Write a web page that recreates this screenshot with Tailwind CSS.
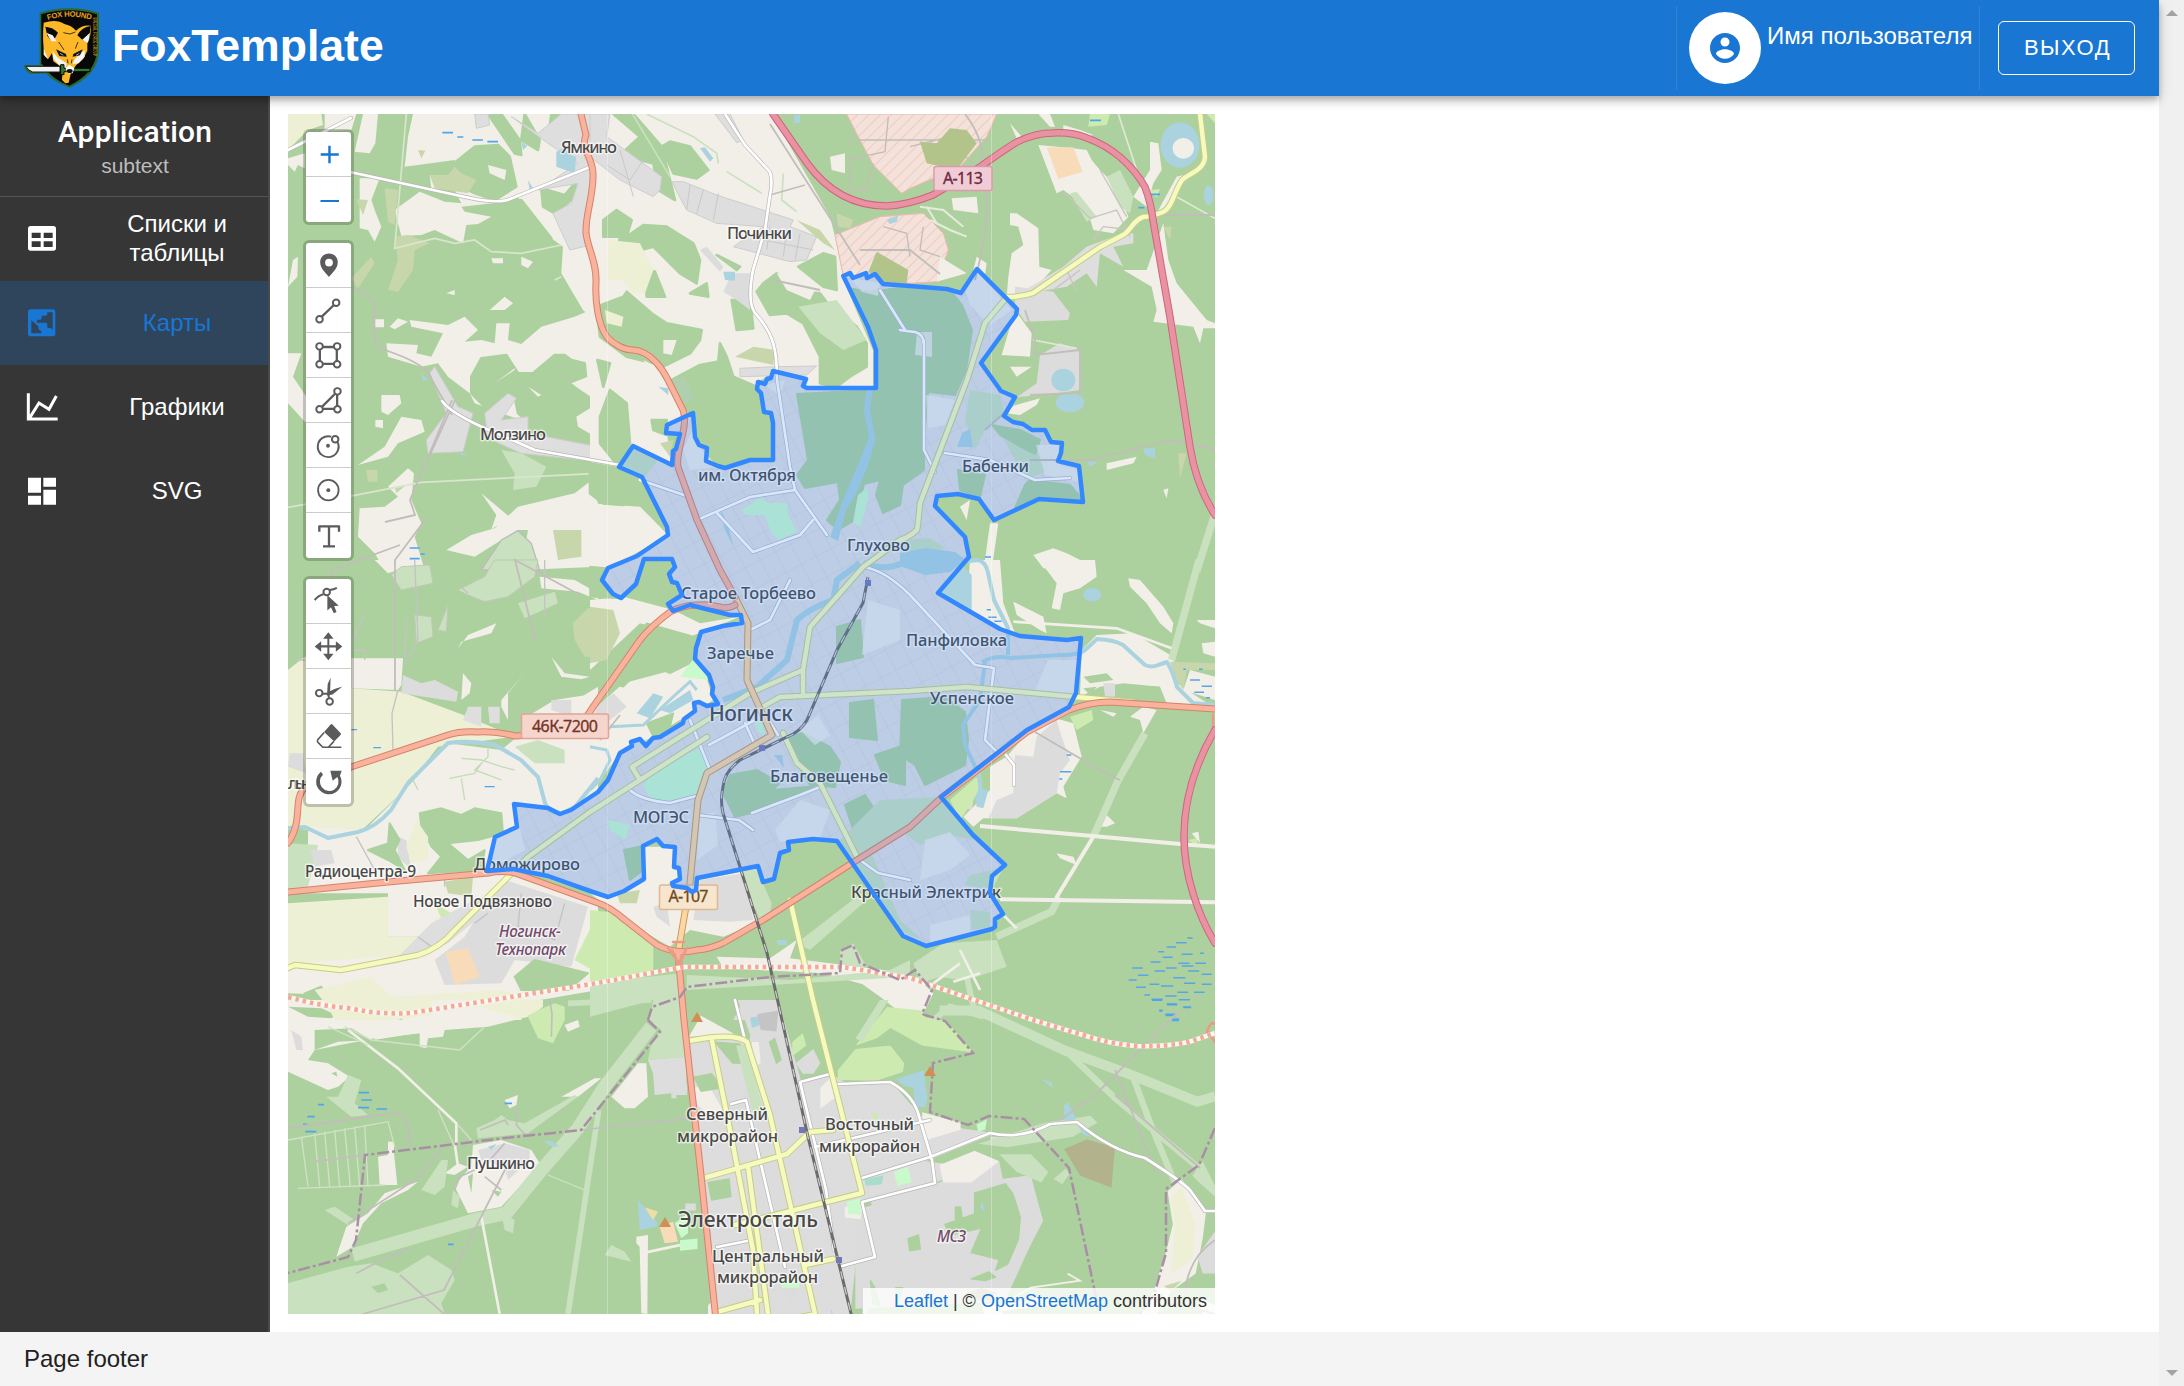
<!DOCTYPE html>
<html lang="ru">
<head>
<meta charset="utf-8">
<title>FoxTemplate</title>
<script src="https://cdn.jsdelivr.net/npm/@tailwindcss/browser@4"></script>
</head>
<body class="w-[2184px] h-[1386px] overflow-hidden flex bg-white font-['Liberation_Sans',Arial,sans-serif]">
<div class="w-[2159px] h-full flex flex-col">
  <header class="relative z-10 h-24 shrink-0 bg-[#1976d2] text-white flex items-center pl-6 pr-6 shadow-[0_3px_6px_-1px_rgba(0,0,0,0.2),0_6px_8px_0_rgba(0,0,0,0.14),0_2px_15px_0_rgba(0,0,0,0.12)]">
    <svg class="w-[76px] h-20 shrink-0" viewBox="72 24 228 240">
      <path d="M119 38Q208 12 297 38V150Q296 225 208 263Q160 245 138 220L90 222Q74 212 72 195L119 196Z" fill="#2c6a2c"/>
      <path d="M124 43Q208 19 291 43V150Q288 218 208 257Q165 240 144 215L124 190Z" fill="#080808"/>
      <path id="arc" d="M143 60Q208 40 276 60" fill="none"/>
      <text fill="#e8a21e" font-size="23" font-weight="700" textLength="132"><textPath href="#arc">FOX HOUND</textPath></text>
      <text transform="translate(280 52) rotate(90)" fill="#b9831d" font-size="14" font-weight="700" textLength="116" lengthAdjust="spacingAndGlyphs">SPECIAL FORCE GROUP</text>
      <path d="M131 68Q170 56 193 72Q214 76 228 92Q246 74 272 77Q275 105 262 130L262 152 250 176 228 196 212 222 206 248 196 250 186 240 188 204 160 184 156 160 144 178 134 168Q126 120 131 68Z" fill="#fdb827"/>
      <path d="M136 80Q160 82 174 98L164 116 156 124 142 108Z M272 78Q244 82 232 106L250 122 268 112Z" fill="#0a0a0a"/>
      <path d="M139 98L158 106 170 124 154 124Z M270 98L264 128 246 120Z M158 152L172 172 188 182 200 190 198 204 178 196 160 176Z M254 150L236 166 224 178 218 192 236 190 254 170Z M131 146L144 176 131 164Z" fill="#f4f4f4"/>
      <path d="M168 148L198 162 200 170 178 168Z M248 148L220 162 218 170 240 166Z" fill="#111"/>
      <path d="M180 160L190 166M228 166L238 160" stroke="#f4f4f4" stroke-width="2"/>
      <path d="M190 98L210 102 226 96M176 126L192 150M234 126L226 146M202 178L204 190M216 178L214 190" fill="none" stroke="#4b3105" stroke-width="3"/>
      <path d="M78 199H180V216H98Q84 212 78 199Z" fill="#f2f2f2" stroke="#181818" stroke-width="3"/>
      <path d="M182 194H192V205H270V215H192V224H182Z" fill="#2e7a2e" stroke="#0a0a0a" stroke-width="3"/>
      <path d="M197 204L208 194 223 204 218 220 202 220Z" fill="#fff"/><ellipse cx="209" cy="213" rx="9" ry="6" fill="#111"/>
    </svg>
    <h1 class="ml-3 -mt-1 text-[44.6px] leading-none font-bold">FoxTemplate</h1>
    <div class="ml-auto h-[84px] w-[304px] border-x border-[#3384d7] flex pl-3">
      <span class="mt-1.5 size-[72px] rounded-full bg-white flex items-center justify-center shrink-0">
        <svg class="size-9" viewBox="0 0 24 24" fill="#1976d2"><path d="M12 2C6.48 2 2 6.48 2 12s4.48 10 10 10 10-4.480 10-10S17.520 2 12 2zm0 3c1.660 0 3 1.340 3 3s-1.340 3-3 3-3-1.340-3-3 1.340-3 3-3zm0 14.200c-2.500 0-4.710-1.280-6-3.220.03-1.990 4-3.080 6-3.080 1.990 0 5.970 1.090 6 3.080-1.290 1.940-3.500 3.220-6 3.220z"/></svg>
      </span>
      <span class="ml-1.5 mt-4 text-2xl leading-[27px] whitespace-nowrap">Имя пользователя</span>
    </div>
    <button class="ml-[18px] w-[137px] h-[54px] rounded-md border border-white pl-0.5 text-[22px] leading-none tracking-[1.5px]">ВЫХОД</button>
  </header>

  <div class="flex h-[1236px] shrink-0">
    <aside class="w-[270px] bg-[#363636] border-r-2 border-[#4a4a4a] text-white">
      <div class="h-[101px] border-b border-[#545454] text-center pt-4 pl-0.5">
        <div class="font-[Roboto] font-medium text-[30px] tracking-[0.25px] leading-10">Application</div>
        <div class="text-[21px] leading-[30px] -mt-px text-[#bdbdbd]">subtext</div>
      </div>
      <nav class="text-2xl leading-[29px] text-center">
        <a class="flex items-center h-[84px] pl-6">
          <svg class="size-9 shrink-0" viewBox="72 663 108 108"><path fill-rule="evenodd" fill="#fff" d="M92 678H160Q168 678 168 686V744Q168 752 160 752H92Q84 752 84 744V686Q84 678 92 678ZM95 698V714H122V698ZM131 698V714H158V698ZM95 724V741H122V724ZM131 724V741H158V724Z"/></svg>
          <span class="ml-[50px] w-[134px] pb-0.5">Списки и таблицы</span></a>
        <a class="flex items-center h-[84px] pl-6 bg-[#2f455c] text-[#1976d2]">
          <svg class="size-9 shrink-0" viewBox="72 344 108 108"><path fill-rule="evenodd" fill="#1976d2" d="M92 357H158Q166 357 166 365V430Q166 438 158 438H92Q84 438 84 430V365Q84 357 92 357ZM158 366H142V371Q142 376 136 376H125V384Q125 388 120 388H111V397H138Q142 397 142 402V413H149Q155 413 158 419ZM94 390V429H124V421Q116 421 115 412V408Z"/></svg>
          <span class="ml-[50px] w-[134px] pb-0.5">Карты</span></a>
        <a class="flex items-center h-[84px] pl-6">
          <svg class="size-9 shrink-0" viewBox="72 595 108 108" fill="none" stroke="#fff" stroke-width="9"><path d="M85 608V685H173M88 683L117 637L147 656L169 616"/></svg>
          <span class="ml-[50px] w-[134px] pb-0.5">Графики</span></a>
        <a class="flex items-center h-[84px] pl-6">
          <svg class="size-9 shrink-0" viewBox="72 847 108 108" fill="#fff"><path d="M84 861H123V906H84ZM84 915H123V942H84ZM130 861H168V888H130ZM130 897H168V942H130Z"/></svg>
          <span class="ml-[50px] w-[134px] pb-0.5">SVG</span></a>
      </nav>
    </aside>

    <main class="p-[18px]">
      <div class="relative w-[927px] h-[1200px] overflow-hidden">
        <svg class="block w-[927px] h-[1200px]" viewBox="288 114 927 1200">
          <defs>
            <pattern id="mil" width="9" height="9" patternUnits="userSpaceOnUse" patternTransform="rotate(45)"><rect width="9" height="9" fill="#f2e2da"/><path d="M0 0V9" stroke="#f5bdb6" stroke-width="1.500"/></pattern>
            <pattern id="milbig" width="24" height="24" patternUnits="userSpaceOnUse" patternTransform="rotate(45)"><rect width="24" height="24" fill="#f2e2da"/><path d="M0 0V24" stroke="#f5bdb6" stroke-width="4"/></pattern>
            <pattern id="res" width="17" height="23" patternUnits="userSpaceOnUse" patternTransform="rotate(-28)"><rect width="17" height="23" fill="#dfdfdf"/><path d="M0 0H17M0 0V23" stroke="#d2d2d2" stroke-width="1.200"/></pattern>
            <pattern id="res2" width="15" height="24" patternUnits="userSpaceOnUse" patternTransform="rotate(-14)"><rect width="15" height="24" fill="#dddddd"/><path d="M0 0H15M0 0V24" stroke="#d2d2d2"/></pattern>
            <path id="town" d="M843.300 276L850 273 853 278 866 273 867 278 875 274 883 284 910 286 947 289 961 293 977 269 1017 309 1016 315 981 363 1001 391 1015 397 1004 416 1013 422 1023 424 1032 430 1045 430 1051 442 1062 443 1061 453 1058 461 1079 466 1083 502 1039 499 994 520 979 499 958 494 937 496 935 506 965 537 969 557 938 593 1000 629 1020 636 1067 640 1081 638 1076 693 1069 707 1027 730 941 797 973 835 1005 865 992 876 990 893 1003 914 995 919 995 927 992 929 926 946 903 936 837 841 813 839 788 842 789 850 780 853 774 879 763 882 758 866 697 878 696 890 692 892 687 888 673 886 672 883 680 879 679 868 674 867 675 847 663 846 657 839 643 846 644 879 624 891 608 897 590 891 548 876 513 869 487 871 495 837 517 827 514 804 548 808 560 814 571 810 598 792 608 780 620 753 632 746 631 742 640 739 646 746 653 738 660 737 683 723 684 719 695 711 694 703 699 702 707 706 718 704 712 694 713 687 709 675 695 659 696 648 701 632 723 626 742 623 741 615 730 615 690 605 673 611 668 604 682 595 677 583 672 582 669 574 675 567 672 559 644 559 636 584 621 598 613 594 602 580 608 568 637 556 668 535 667 527 642 477 619 467 633 446 672 465 673 451 676 449 680 434 666 433 667 425 693 413 695 437 699 445 707 448 706 461 718 466 725 468 750 460 773 460 773 423 771 413 764 412 761 393 757 389 758 382 765 384 767 379 771 378 773 371 806 379 803 386 807 388 876 388 876 350 868 327Z"/>
            <path id="motorway" d="M773 114L807 163C830 195 858 206 887 206C905 205 918 201 933 195L980 167C997 155 1008 147 1017 142Q1035 133 1053 133Q1072 132 1087 138Q1106 145 1120 157Q1136 171 1145 187Q1151 203 1153 220L1170 317L1190 447Q1196 485 1215 515M1215 730C1195 764 1184 800 1184 837C1184 875 1198 915 1215 943"/>
            <path id="trunk" d="M581 114L586 135C580 150 592 155 593 173C594 195 585 215 586 233C588 250 597 262 596 283C595 300 598 325 607 337C614 345 625 350 633 350C652 351 664 372 668 380L683 410C689 428 675 450 678 467L697 520L720 570L735 597M735 605C725 612 715 603 700 605Q685 604 670 612Q650 627 640 640L593 707Q580 730 553 734L515 736Q495 731 478 732Q460 731 448 735L351 767Q310 778 305 787C292 800 304 820 288 843M288 892L388 882L488 873Q502 870 515 873L598 903Q610 907 625 920L657 945Q676 955 697 950Q710 949 723 943L763 920L857 860L910 827L941 798L1027 732L1069 710Q1090 702 1110 702L1215 709M678 953L684 1020L701 1175L717 1330"/>
            <path id="prim" d="M735 597L748 623 747 680 772 735 707 773 698 800 690 883 678 953"/>
            <path id="sec" d="M757 710L780 697 910 691 967 687 1076 697 1133 702M1200 114L1205 157C1204 170 1190 173 1182 180C1174 192 1172 208 1163 212Q1150 217 1143 217C1133 220 1130 232 1123 235Q1108 243 1100 247L1033 293Q1022 297 1007 297L985 323 967 380 920 503Q918 525 917 530Q908 538 900 540L863 567 810 627 803 670 803 695M803 670L750 693 632 767 640 780M707 737L640 780 590 812 528 857 455 930Q440 948 418 955L341 970 295 965 288 968M783 733L797 763 820 783 857 857M790 900L813 1000 862 1193M688 1041Q735 1032 747 1042L770 1115 815 1314M712 1041L733 1145 753 1250 757 1314M704 1178L787 1154 810 1132 833 1130M735 1225L862 1193M748 1166L768 1314M717 1312L760 1300M747 1327L811 1315M805 1265L833 1259"/>
            <path id="white" d="M288 150L351 118M350 172L470 198Q500 204 510 199L590 167M288 150L308 140M442 401Q450 412 480 426L535 450 620 465M640 480L690 497M725 114L745 145 770 172Q773 182 770 195L765 230 753 270Q747 302 755 313C775 335 777 352 777 380L790 467 795 490 827 535M697 520L750 497 795 490 M900 330Q905 331 915 332 924 334 924 345V450L935 472M945 453L990 460 1035 480 1070 478M880 290L905 330M863 567Q885 570 910 595L975 665 994 668 985 740 1000 755M717 513L753 552 800 535 813 520M753 830 739 820 697 815M860 860L878 873 910 880M1006 755L1014 765V785M735 1000L745 1040M731 1104L746 1100 785 1267M800 1082L830 1074M800 1082L826 1190 834 1250M838 1084L890 1082Q915 1095 920 1120L932 1160 935 1183 862 1202M815 1147L930 1120M862 1202L875 1257 842 1266M862 1178L930 1157 990 1133Q1020 1140 1050 1124L1077 1122Q1110 1150 1145 1158Q1180 1180 1190 1190L1205 1211H1215M717 1247L752 1240M752 813L800 795 820 787M630 790Q640 800 670 803L700 795M750 630L770 620 790 580M709 745L755 720M745 723L755 745M770 722L778 735M710 770L690 720"/>
            <path id="grey" d="M351 287Q375 295 375 310C370 355 380 345 410 360Q430 370 432 380L452 415M452 400L410 500 415 515 385 522M455 400L430 455M1013 405L985 430M1030 460L1090 460 1170 440 1215 449M1150 215H1215M770 195L805 185M1025 310L1035 340V355L1080 350V393L1030 395M965 114Q985 140 982 165 995 205 975 280M770 124L860 265M773 280L820 290M860 250 910 250 940 274M1035 732L1100 770 1120 780M480 1130L505 1120 508 1125M510 1160 444 1290 363 1314M400 1275L444 1314M288 1128L395 1113Q408 1113 411 1147M1180 1010L1095 1095 1060 1120M1115 1070 1155 1170M1115 1095 1200 1168M970 1300L1130 1292 1215 1314M1185 1300Q1185 1260 1215 1240M332 600V570L400 545M395 690V560L425 520M535 640 515 560 580 595M620 715 600 740"/>
          </defs>
          <rect x="288" y="114" width="927" height="1200" fill="#add19e"/>

          <!-- north-west fields -->
          <g transform="translate(288 110) scale(.33333)">
            <path fill="#eef0d5" d="M0 12H100L105 45 60 60 0 120Z"/>
            <g fill="#f2efe9">
              <path d="M110 12H205L190 60 110 62ZM225 12H270L262 100 245 130 200 125ZM0 145 50 130V175L30 165 20 185 0 165Z"/>
              <path d="M375 12H930V640L885 600 820 490 825 410 790 385 690 262 655 275 520 290 530 305 610 320 570 342 535 345 525 400 440 360 400 375 340 378 320 300 395 245 470 275 520 280 500 240 430 235 425 195 490 200 520 190 500 150 350 170 360 80Z"/>
              <path d="M215 205H275L250 270 260 300 280 350 260 395 240 360 215 355Z"/>
              <path d="M365 630 480 645 530 620 570 660 530 695 580 690 620 700 625 640 665 640 660 690 700 702 760 650 860 620 930 590V960L780 960 560 880 545 850 480 800 450 760 400 770 300 740 295 700 390 705 385 730 430 740 465 670 370 650Z"/>
              <path d="M475 1320 550 1275 620 1255 690 1190 860 1150 905 1115 930 1180V1370L700 1380 720 1260 690 1260 640 1290 560 1340ZM580 1150 670 1225 655 1230 610 1258 625 1215Z"/>
              <path d="M215 1195 290 1190 330 1160 300 1130 360 1075 378 1090 370 1170 400 1240 380 1280 410 1380H290L260 1330 210 1280ZM0 730H40L15 800 55 860V940L0 880ZM280 855 335 855 340 880 300 915 280 905ZM340 920 400 930 410 965 330 1000 300 1040 210 1065 290 1010ZM262 930 285 930V955L262 950ZM15 450 30 440 28 500 0 530ZM610 445H645V460H615ZM700 440 735 455 720 475 700 465ZM605 600 650 560 675 580 650 600ZM475 550 500 540 500 555ZM262 628H288V652H262ZM305 650 330 625 360 635 320 658Z"/>
            </g>
            <g fill="#add19e" stroke="#add19e" stroke-width="8" stroke-linejoin="round">
              <path d="M510 150 560 110 630 105 665 140 685 230 620 270 560 250 530 235 490 170ZM600 12H640L695 90 700 135 680 130ZM710 12 755 90 750 120 700 90ZM790 12H820L810 60 780 90ZM760 235 830 255 860 220 875 250 800 310 765 290ZM640 290 700 270 790 385 650 420Z"/>
              <path d="M550 800 580 745 655 735 690 790 735 790 800 735 830 735 850 750 890 760 895 810 850 825 930 880V1000L880 980 750 960 690 910 680 860 600 900 550 850Z"/>
            </g>
            <path fill="#f2efe9" d="M600 165 655 180 650 210 605 190ZM850 820 900 800 930 830V870ZM865 920 930 880V985L870 950ZM720 830 760 855 750 860ZM620 820 680 775 680 780Z"/>
            <path fill="#c8d7ab" d="M425 195 480 195 500 170 520 190 565 210 540 250 440 235ZM290 235 330 240 320 345 300 335ZM320 380 360 375 425 400 380 420 375 480 330 545 300 540 330 450ZM190 505 250 440 260 460 210 535ZM205 268 240 270 225 315ZM235 1080H268V1115L240 1115ZM390 120 412 122 400 145ZM795 1260H880V1340L810 1350ZM320 1130 355 1125 325 1150Z"/>
            <path fill="#c9e1bf" stroke="#bbb" stroke-width="4" d="M580 1380 640 1290 690 1262 730 1300 755 1380Z"/>
            <path fill="#c9e1bf" d="M640 1020 700 1030 775 1070 745 1130 675 1140 680 1090Z"/>
            <path fill="#dedede" stroke="#cdcdcd" stroke-width="3" d="M425 790 440 770 510 890 555 910 525 1025 420 1030 415 990 475 910ZM590 910 660 850 685 865 640 930 720 920 720 970 930 1010V1055L700 1030 600 985ZM560 12H600L605 45 565 55ZM670 20 750 70 820 12H930V400L845 420 795 310 850 280 870 220 750 240 870 160 780 100Z"/>
            <path fill="#aad3df" d="M805 125 830 112 850 135 865 140 860 190 805 170ZM720 210 735 235 725 240ZM700 95 718 108 705 120ZM400 790 420 810 405 812ZM515 1025 540 1035 520 1035Z"/>
            <path fill="none" stroke="#d9e5cd" stroke-width="5" d="M355 12 320 415 440 385 500 400 560 390 610 425 700 430 820 405M400 1117 930 1090M0 1192 180 1160 400 1117M820 500 800 510"/>
            <path stroke="#4ea5ee" stroke-width="5" d="M463 68H495M508 81H526M553 90H585M598 95H630M365 1314H395M397 1332H410M365 1346H395"/>
          </g>

          <!-- north centre fields -->
          <g transform="translate(590 110) scale(.33333)">
            <path fill="#f2efe9" d="M0 12H545L720 320 735 380 760 500 860 720V835H640L550 785 500 820 550 1050 400 1070 310 910 230 945V970L248 1060 130 1008 86 1072 0 1180ZM0 1180 150 1190 234 1275 50 1380H0ZM720 140 765 130 765 190 725 180Z"/>
            <g fill="#add19e" stroke="#add19e" stroke-width="8" stroke-linejoin="round">
              <path d="M70 12H130L215 110 255 270 205 240 190 160 90 135 150 80ZM240 95 300 110 355 180 320 205 250 190 215 110ZM40 330 80 300 125 330 110 380 160 345 230 350 310 400 330 450 320 520 270 490 190 410 80 440 90 380 40 380Z"/>
              <path d="M165 480 195 485 225 560 170 560ZM110 545 185 610 230 640 335 660 330 690 300 730 220 770 190 760 110 740 30 680 20 590 100 560ZM300 550 350 520 355 560ZM425 570 480 570 490 655 440 660ZM500 545 520 520 560 490 600 540 690 550 720 590 800 650 830 700 830 770 780 800 740 830 690 820 690 740 640 640 590 610 540 615ZM380 435 450 470 440 480ZM625 470 700 430 735 440 740 540 700 530Z"/>
              <path d="M245 810 330 765 385 755 390 700 410 740 430 800 500 830 545 905V1050L480 1050 400 1070 350 1050 310 910 280 900ZM0 1060 86 1075 150 1100 180 1150 100 1185 40 1180 0 1150ZM30 920 60 840 110 880 120 1000 86 1070 30 1000ZM185 930 230 930V975L190 960ZM22 750 60 760 40 830Z"/>
            </g>
            <path fill="#c9e1bf" d="M625 590 740 570 830 690 760 720 690 670Z"/>
            <path fill="#b0cfae" d="M245 810 285 800 310 860 285 885Z"/>
            <path fill="#f2efe9" d="M560 490 680 530 660 570 590 540ZM220 690 260 690 245 735 220 730ZM160 750 200 770 190 800Z"/>
            <path fill="#eef0d5" d="M55 390 150 400 190 480 165 550 130 550 100 510 50 510ZM45 600 100 620 95 650 50 640Z"/>
            <path fill="#dedede" stroke="#cdcdcd" stroke-width="3" d="M0 12H60L50 80 215 200 210 240 190 260 90 210 0 140ZM245 215 280 215 380 255 610 330 600 350 680 380 650 450 600 455 430 410 520 350 380 340 290 300ZM450 775 560 770 680 768 650 795 450 800ZM375 12H420L460 90 440 98Z"/>
            <path fill="none" stroke="#c8c8c8" stroke-width="3" d="M50 165 120 210 160 150M90 120 130 260M300 225 290 300M340 240 320 310M385 250 370 330M540 350 530 420M590 360 580 440M630 370 615 450M520 390 670 420"/>
            <path fill="#dcdcdc" d="M400 545 425 490H480V600L440 570ZM330 420 350 410 400 470 390 485Z"/>
            <path fill="#c8d7ab" d="M435 740 490 710 555 720 550 765 480 750ZM740 310 790 330 780 355 745 350ZM620 330 690 360 735 420 700 400ZM210 1000 250 990 240 1040Z"/>
            <path fill="url(#milbig)" stroke="#f3b7ae" stroke-width="3" d="M770 12H1220L1190 80 1110 170 960 235 935 250 850 165 810 90ZM735 375 870 320 1000 310 1060 370 1075 420 1040 515 960 520 760 498Z"/>
            <path fill="none" stroke="#c3bdba" stroke-width="4" d="M770 90H1200M895 20 885 125 770 150M960 110 1060 85 1150 160M880 350 950 370 960 440M1000 350 990 420 1050 440M780 160V240M850 160 825 240 780 240"/>
            <path fill="#b3c48a" d="M835 485 860 425 955 480 950 520 880 522ZM990 95 1040 100 1080 55 1130 60 1160 100 1100 180 1010 160Z"/>
            <path fill="#aad3df" d="M330 115 345 112 370 145 360 155ZM400 485 435 485V512L405 510ZM205 830 235 835V855ZM612 15H630V38H612ZM890 330 925 315 920 335 900 342ZM690 575 700 590Z"/>
            <path fill="none" stroke="#c9e1bf" stroke-width="5" d="M170 12 310 80 380 130 385 160M410 185 515 250M580 190 575 270 620 305M120 0 240 200"/>
          </g>

          <!-- north-east forest clearings -->
          <g transform="translate(900 110) scale(.33333)">
            <path fill="#f2efe9" d="M330 310 350 310 415 355 418 470 455 480 400 540 320 560 325 500 335 430 370 405 355 350 330 345ZM415 105 520 115 560 120 575 150 600 180 650 230 685 320 640 370 580 360 560 290 490 240 470 250ZM670 480 740 480 790 340 805 450 830 520 920 630 945 640V655H910L900 700 880 650 760 635 770 600 755 530ZM830 200 870 190 790 310 770 310ZM750 95 775 100 785 180 760 220 740 290 700 260 750 180ZM345 600 395 670 390 740 305 735ZM330 890 420 865 410 885 360 915 320 910ZM330 770 395 770 350 800ZM400 1335 460 1315 500 1330 590 1375H430ZM490 45 540 60 580 75 560 80 490 65ZM415 12H450L465 50 450 50ZM330 40 365 80 350 85ZM155 265 230 260 235 310 160 300ZM120 440 200 490 110 515ZM230 440 260 460 255 495 220 480ZM620 1060 710 1040 700 1060 620 1080ZM790 1140 805 1135 800 1165ZM180 1190 210 1170 200 1230ZM270 1240 295 1240 275 1380 255 1350Z"/>
            <path fill="none" stroke="#e6ebdc" stroke-width="6" d="M60 290 130 300 190 350M90 330 150 360 200 380M80 290 110 340"/>
            <path fill="#f8dcba" d="M440 112 520 112 548 185 475 207Z"/>
            <path fill="#c9e1bf" d="M510 250 530 245 590 320 560 335ZM620 200 660 180 700 260 690 310 660 290Z"/>
            <path fill="#cdebb0" d="M565 50 570 12H630L620 45ZM740 240 780 238 770 262ZM920 12H945V40Z"/>
            <path fill="#dedede" d="M350 555 490 470 560 410 640 380 700 370V400L640 410 670 470 600 430 590 530 560 490 500 530Z"/>
            <path fill="#dcdcdc" d="M345 530 460 545 510 610 505 630 375 635 345 590ZM420 735 480 700 540 720 540 840 470 850 350 862 410 820Z"/>
            <g fill="#aad3df"><ellipse cx="840" cy="105" rx="58" ry="68"/><ellipse cx="490" cy="810" rx="36" ry="34"/><ellipse cx="510" cy="878" rx="43" ry="29"/><ellipse cx="926" cy="256" rx="14" ry="30"/><path d="M730 1015H765V1045L735 1035ZM560 1055H595L570 1070Z"/></g>
            <ellipse cx="850" cy="115" rx="32" ry="31" fill="#f2efe9"/>
            <path fill="#c8d7ab" d="M790 350 815 350 810 390ZM835 1030 860 1030 840 1105Z"/>
            <path fill="none" stroke="#c8c4c0" stroke-width="4" d="M490 245 570 325 650 300 690 380M600 180 680 320M580 390 610 350 700 360M460 540 540 480M500 480 530 545"/>
            <path fill="none" stroke="#dfe9d4" stroke-width="5" d="M655 12 710 180M820 255 945 325M400 690 530 715"/>
            <path fill="none" stroke="#c9e1bf" stroke-width="22" d="M945 1210 890 1385"/>
            <path stroke="#4ea5ee" stroke-width="5" d="M570 31H603M750 253H780M715 293H733M255 1341H273"/>
          </g>

          <!-- west valley -->
          <g transform="translate(288 560) scale(.33333)">
            <path fill="#eef0d5" d="M0 330 50 290 190 385 340 395 540 470 680 530 450 560 350 690 200 830 60 810 0 800Z"/>
            <path fill="#f2efe9" d="M190 295H345L340 375 330 390 190 385ZM60 800 230 810 350 690 480 550 640 570 700 520 930 380V700L650 1000 0 1000 60 860ZM300 990 560 950 660 940 930 1030V1290L700 1330 560 1320 0 1300V1200L380 1180 400 1130 300 1130ZM510 265 540 225 600 200 625 190 610 220 520 245ZM640 420 710 340 660 400 660 480 640 440ZM525 340 550 370 545 400 520 420ZM755 50 860 60 930 100V120L870 95 760 85ZM260 0H320L330 30 300 40ZM790 290 830 340 905 350 880 358 820 350ZM700 480 800 420 930 400V470L700 520Z"/>
            <path fill="#c9e1bf" stroke="#c0c8b8" stroke-width="3" d="M310 45 340 20 425 15 435 70 340 90ZM510 90 590 50 620 0H750L740 50 660 110 590 125 540 105ZM380 165 430 170 435 230 385 250ZM450 210 480 135 475 215Z"/>
            <path fill="#c9e1bf" d="M690 130 800 95 810 130 710 175ZM680 560 750 540 830 570 830 610 740 610ZM0 850 90 855 60 980 0 990Z"/>
            <path fill="#c8d7ab" d="M855 190 900 145 930 150V290L890 290 860 240ZM470 965 555 950 550 1010 480 1000Z"/>
            <path fill="#dcdcdc" d="M345 345 400 370 440 360 510 395 505 425 340 400ZM790 420H850V470L790 450ZM560 1080 650 960 900 1040 850 1220 680 1200 640 1270 470 1275 440 1200 530 1130ZM68 870 130 870 140 910 80 920ZM330 830 355 840 370 930 330 890ZM5 580 45 580 55 640 0 620Z"/>
            <path fill="#add19e" stroke="#add19e" stroke-width="6" stroke-linejoin="round" d="M395 760 460 745 520 765 560 745 640 760 645 820 570 840 480 850 540 900 590 870 580 930 420 940 460 890 430 860 400 800ZM240 870 300 850 305 790 335 840 320 870 350 930 300 900ZM680 1250 740 1200 900 1240 840 1290 700 1290ZM0 1010 150 1010 130 1040 0 1030ZM50 1300 100 1280 115 1310 80 1330ZM50 1345 140 1360 130 1375Z"/>
            <path fill="#eef0d5" d="M355 860 385 780 420 830 420 900 370 910ZM0 1030 300 1010V1130H400L380 1180 0 1215ZM80 1290 250 1250 310 1310 640 1290 700 1310V1380H150Z"/>
            <path fill="#f8dcba" d="M473 1175 540 1165 575 1250 500 1275Z"/>
            <path fill="#cdebb0" d="M860 1200 930 1060V1240ZM440 1030 490 1060 460 1075Z"/>
            <path fill="#dedede" d="M380 1140 430 1090 540 1030 640 990 600 1050 480 1150 330 1210 200 1230 330 1190ZM540 440 580 440V500L525 480ZM600 440H635V490H605Z"/>
            <path fill="none" stroke="#c3c3c3" stroke-width="4" d="M190 270H230V300M355 170 350 290M380 0 390 240 350 310M315 570 312 460 330 390M20 300H50M230 160 190 250M770 0V170M540 100 520 80M205 830 260 930M470 930 470 980M390 1130 430 1160 410 1180M700 1000 690 1100 800 1140 830 1030M560 1090 600 1060"/>
            <path fill="none" stroke="#c5dbb7" stroke-width="4" d="M520 595 580 600 640 620 680 630M580 610 560 640 485 655M520 655 530 720M600 560V590L560 630 640 660M370 650 390 690"/>
            <path stroke="#4ea5ee" stroke-width="4" d="M256 563H279M590 680H620M190 509H207"/>
          </g>

          <!-- around the city, south -->
          <g transform="translate(590 560) scale(.33333)">
            <path fill="#f2efe9" d="M0 120 100 110 250 150 330 190 450 170 300 230 150 190 0 330ZM0 460 100 370 250 330 330 290 370 420 170 540 90 580 0 700ZM158 860 255 860 270 975 330 960 480 930 500 1090 400 1130 300 1110 240 1160 100 1080 0 1000 60 1010ZM380 1190 540 1195 620 1140 600 1195 960 1240V1330L880 1290 700 1240 400 1225ZM800 1260 960 1260V1380L870 1310Z"/>
            <path fill="#add19e" stroke="#add19e" stroke-width="5" stroke-linejoin="round" d="M0 20 55 25 37 60 92 115 0 110ZM110 260 170 190 310 230 320 300 240 340 170 310 100 380 60 370ZM160 0H250L240 50 270 100 235 132 140 75ZM500 970 560 950 600 860 740 850 900 1080 700 1180 560 1100ZM170 490 250 460 240 500 190 530Z"/>
            <path fill="#c8d7ab" d="M0 140 70 150 90 220 50 300 0 310ZM80 1000 150 990 140 1030 90 1030Z"/>
            <path fill="#c8facc" d="M270 350 315 290 355 340 360 360Z"/>
            <path fill="#aad3df" d="M140 460 190 400 220 410 180 475ZM210 450 300 390 310 420 240 460ZM560 1140H590V1155L565 1155Z"/>
            <path fill="#cdebb0" d="M0 1050 90 1060 190 1140V1240L0 1265Z"/>
            <path fill="#dcdcdc" d="M330 960 460 940 490 1080 420 1085 310 1080ZM190 1040 230 1030 240 1100 200 1070ZM20 440 70 400 110 440 60 480 10 480ZM450 1340 540 1320 570 1380H430Z"/>
            <path fill="#c9e1bf" d="M0 1270 270 1240V1380H180L190 1320 0 1370ZM290 1290 960 1250V1200L900 1230 600 1260 290 1245ZM620 1150 800 1010 830 1020 660 1170ZM455 935 500 925 545 1030 540 1060 510 1080 460 960ZM750 1170 790 1150 830 1220 750 1220Z"/>
            <path fill="none" stroke="#aad3df" stroke-width="9" d="M60 500 160 495 250 410 300 365 320 390M0 560 50 570 60 600 30 660 0 690"/>
          </g>

          <!-- east -->
          <g transform="translate(900 560) scale(.33333)">
            <path fill="#f2efe9" d="M415 0H585L590 50 540 85 490 100 480 150 455 145 470 70 440 30ZM685 55 720 60 790 140 820 190 815 220 780 190 740 130 690 80ZM340 125 430 170 440 220 420 210 350 165ZM210 0H300L310 130 345 220 300 207 200 140ZM545 270 590 225 700 220 820 290 830 370 930 435 800 430 780 380 670 370 600 380 540 410ZM870 330 945 350V420L850 390ZM890 180 945 180V205L900 190ZM905 250 945 245V290L910 280ZM320 590 380 520 450 470 520 490 545 590 490 680 500 715 470 700 350 775 250 775 220 800 190 770 270 690 270 620ZM600 800 620 765 645 790 620 800ZM470 880 520 890 530 915 480 895ZM875 820 895 815 900 850ZM0 1270 50 1250 100 1300 70 1360 0 1330ZM600 450 650 460 640 470ZM690 470 730 440 770 450 730 520 720 480Z"/>
            <path fill="#aad3df" d="M120 95 190 20 215 45V150ZM220 685 265 690 250 745 230 740Z"/><ellipse cx="577" cy="104" rx="27" ry="20" fill="#aad3df"/>
            <path fill="#dcdcdc" d="M410 530 470 480 485 530 510 600 480 640 470 700 350 775 265 775 290 720 340 700 345 585 400 590ZM180 740 220 720 215 750ZM610 370H645V410H615Z"/>
            <path fill="#cdebb0" d="M510 470 575 450 580 480 530 510ZM150 720 230 650 240 680 215 730 180 780ZM865 840 890 835 895 860Z"/>
            <path fill="#add19e" d="M550 350 620 340 640 360 570 370ZM550 385 590 380 570 405ZM660 375 780 380 780 420 660 415Z"/>
            <path fill="#c8d7ab" d="M810 305 945 310V330L860 330 850 390 830 360Z"/>
            <path fill="#c9e1bf" d="M40 1210 130 1150 290 1140 320 1220 230 1250 180 1260 120 1250 60 1270Z"/>
            <path fill="none" stroke="#c9e1bf" stroke-width="22" stroke-linejoin="round" d="M897 0 815 300M735 520 655 660 580 830 M478 1010 455 1055 290 1130"/>
            <path fill="none" stroke="#c9e1bf" stroke-width="18" d="M200 1250 220 1340M180 1170 190 1250M100 1380 150 1340 250 1370"/>
            <path fill="none" stroke="#f2efe9" stroke-width="12" d="M240 798 570 827 840 852 945 860M300 1018 945 1027M580 830 468 1015"/>
            <path fill="none" stroke="#f2efe9" stroke-width="8" d="M340 185 650 205 815 265M310 1065 350 1105M180 1170 240 1290M160 1265 240 1240M100 1270 180 1210"/>
            <path fill="none" stroke="#58a5e5" stroke-width="4.500" d="M862 1134H878M828 1148H860M800 1161H828M775 1175H792M845 1183H878M900 1180H912M788 1192H818M752 1206H782M835 1210H868M886 1210H918M697 1224H728M798 1224H830M845 1218H880M764 1233H796M864 1233H898M714 1246H745M820 1253H856M905 1243H935M686 1260H710M748 1273H778M783 1278H820M852 1270H886M905 1273H935M708 1282H738M832 1297H864M882 1297H914M733 1305H750M796 1308H830M755 1318H788M836 1319H870M800 1332H830M850 1342H872M778 1351H788M796 1363H828M815 1377H838M870 360H900M905 379H936M883 397H912M918 413H930M897 328H908M850 328H858M480 635H514M478 657H487M500 585H514M260 149H273M265 172H290M283 184H305"/>
          </g>

          <!-- south-west forest -->
          <g transform="translate(288 1000) scale(.33333)">
            <path fill="#f2efe9" d="M0 0H430L740 0 720 50 600 80 470 90 465 110 420 115 415 145 395 140 395 100 260 115 80 150 60 180 120 190 185 230 150 260 120 270 0 215ZM270 470 300 465V425H318V460L328 555H275ZM555 435 640 420 730 450 755 490 700 555 640 620 540 640 500 560 530 520 550 500ZM970 290 1050 190 1075 190 1080 290 1040 325 1010 325ZM650 300 690 285 685 315 665 325ZM830 75 870 60 875 80 840 95ZM820 290 920 235 940 235 870 290ZM145 770 175 680 240 640 290 580 390 545 360 570 280 610 225 670 195 740ZM95 830 115 835 125 870 100 860ZM1045 710 1080 705 1078 942 1060 940 1055 740 1045 730ZM470 520 510 490 540 500 500 525ZM0 25 60 25 80 60 140 30 150 45 0 90Z"/>
            <path fill="#add19e" d="M0 20 100 25 145 45 130 55 60 50ZM80 90 190 85 250 120 150 125 80 150ZM300 50 350 50 340 60ZM130 220 145 215 148 230ZM540 530 555 520 550 580ZM610 570 640 575 630 590Z"/>
            <path fill="#eef0d5" d="M110 0H430V45L310 60 140 60ZM570 20 690 0 765 0V20L740 40 700 55Z"/>
            <path fill="#cdebb0" d="M720 50 740 35 800 10 830 20 830 60 795 130 750 115Z"/>
            <path fill="#c9e1bf" d="M115 290 150 290 180 225 220 240 200 310 240 345 190 350ZM565 385 620 360 640 345 660 360 710 370 860 285 870 290 720 400 570 415ZM400 570 460 480 480 480 470 560 440 585ZM110 630 140 620 200 660 180 675ZM0 850 180 800 250 790 330 820 420 765 490 810 500 840 460 910 470 942H0ZM950 765 970 735 1010 755 1030 785ZM640 640 680 660 675 700 650 690ZM495 570 515 590 510 625 490 615ZM1090 130 1120 90 1080 60 1100 10H1190L1195 170 1080 180Z"/>
            <path fill="none" stroke="#c9e1bf" stroke-width="40" d="M195 765 560 660 655 640 760 510 870 385 950 260 1090 80"/>
            <path fill="none" stroke="#c9e1bf" stroke-width="17" d="M932 330 840 942M840 10 1090 0"/>
            <path fill="#add19e" d="M250 860 290 850 300 870 270 880Z"/>
            <path fill="#dcdcdc" d="M570 450 650 430 725 450 725 480 660 540 650 500 580 480ZM10 90 40 110 45 150 25 150Z"/>
            <path fill="url(#res2)" d="M1080 180 1195 170V285H1165V295H1150V280L1100 285 1095 220Z"/>
            <path fill="#aad3df" d="M1050 600 1110 670 1105 680 1055 690ZM765 425 790 422 815 440 795 440ZM600 440 625 432 610 450Z"/>
            <path fill="#f8dcba" d="M1115 680 1155 665 1170 725 1130 730Z"/><path fill="#eedfa5" d="M1070 622 1110 635 1095 660Z"/>
            <path fill="#c8facc" d="M1160 670 1200 640V700L1180 715Z"/>
            <path fill="none" stroke="#f2efe9" stroke-width="8" d="M180 90 330 205 505 370 505 430M580 650 635 942M260 115 390 95M1060 760 1200 730M500 430 510 500"/>
            <path fill="none" stroke="#cfe2c4" stroke-width="4" d="M120 80 240 135M170 80 250 120 515 150 590 80M0 420 300 365 320 440M30 565 290 555M40 410 60 560M80 400 95 560M110 395 125 560M140 390 155 560M170 385 187 560M200 380 215 560M230 375 240 560M780 525 890 570M450 330 500 440M510 375 550 420"/>
            <path stroke="#4ea5ee" stroke-width="5" d="M213 278H243M220 300H252M210 323H243M265 327H297M90 314H108M58 350H80M52 395H85M45 373H58M650 310H672M480 733H497"/>
            <path fill="none" stroke="#c3bcc0" stroke-width="5" d="M785 0 792 40 790 110M690 320 685 375 712 405M80 485 230 465M650 430 610 475M590 530 640 570M500 570 515 530 560 510M880 390 1200 355M205 820 280 780 365 745M180 670 380 540 465 440"/>
          </g>

          <!-- Elektrostal -->
          <g transform="translate(680 1000) scale(.35080)">
            <path fill="url(#res2)" d="M20 110 180 115 220 250 345 230 430 210 480 240 600 230 660 300 720 360 760 360 900 380 700 460 860 480 520 580 480 942H95L60 480Z"/>
            <path fill="#dcdcdc" d="M165 0H280L345 230 400 500 360 740 300 942H500L600 780 540 560 740 520 840 480 910 460 920 510 1000 500 1030 630 930 850 890 850 520 860V942H330L180 250 200 100ZM0 240H20V270H0ZM15 580H45V600H15ZM330 180 380 140 400 180 380 210 350 210Z"/>
            <path fill="#dcdcdc" d="M500 600 840 490 910 640 900 860 500 880Z"/>
            <path fill="#f2efe9" d="M40 250 80 240 120 310 100 340 50 300ZM60 45 160 100 25 105ZM205 120 225 120 230 180 210 190ZM610 0H690L700 20 660 30 620 0ZM740 470 840 430 910 460 830 520 750 520ZM690 320 800 350 800 370 700 400ZM400 250 430 220 440 280 400 310ZM470 590 520 580 515 625 470 620ZM1390 545 1430 510 1500 600 1490 680 1470 780 1400 830 1330 942 1290 942 1350 830 1385 720 1405 640ZM1480 850 1525 870V942H1500ZM910 870 1020 850 1120 860 900 890ZM860 870 900 860 950 942H880ZM80 870 100 850 105 942H80Z"/>
            <path fill="#add19e" stroke="#add19e" stroke-width="4" stroke-linejoin="round" d="M840 550 940 520 970 620 960 740 900 770 910 740 830 720 860 650 770 670 755 640 840 610ZM785 590 800 590 805 625 785 625ZM650 680 680 670 685 710 655 715ZM830 795 880 775 900 790 870 800ZM960 560 990 510 1015 630 1000 635ZM543 800 555 820 570 870 550 865ZM615 820 635 820 620 870ZM255 120 270 110 288 170 275 180ZM390 90 420 140 400 140ZM100 120 170 125 190 180 150 180ZM40 220 90 210 120 250 60 260ZM80 520 140 510 145 560 90 570ZM0 730 60 720 60 870 0 860Z"/>
            <path fill="#dcdcdc" d="M920 510 1000 500 1035 630 920 850 895 850 985 640 950 550ZM1475 730 1525 660V780L1490 780ZM885 390H910V410H885Z"/>
            <path fill="#cdebb0" d="M450 200 500 140 600 130 640 180 635 205 560 230 450 228ZM500 130 590 20 690 30 700 50 760 60 835 150 690 130 590 100ZM320 120 350 95 360 130 320 160ZM550 320 570 330 550 345Z"/>
            <path fill="#add19e" d="M540 125 600 80 690 130 720 140 720 180 640 180 600 130Z"/>
            <path fill="#c9e1bf" d="M500 110 570 0 595 0 520 120ZM160 130 190 130 240 330 210 330ZM850 410 1040 350 1170 330 1190 350 1120 390 930 420ZM910 440 1000 440 1050 490 1030 520 960 490ZM1065 510 1100 480 1110 495 1090 525ZM1460 500 1490 460 1525 530V560L1480 520Z"/>
            <path fill="none" stroke="#c9e1bf" stroke-width="28" d="M740 30 850 30 1100 145 1290 215 1475 290 1525 275"/>
            <path fill="none" stroke="#c9e1bf" stroke-width="18" d="M1100 145 1240 280 1480 480M1290 215 1340 350 1410 520"/>
            <path fill="#aad3df" d="M615 225 695 200 705 280 700 305 670 305 665 250 640 245ZM1095 300 1105 290 1130 340 1095 345ZM1130 350 1170 390 1150 385ZM1030 225 1060 235 1062 250ZM855 590 862 575 870 605ZM200 50 240 45 245 65 205 80ZM430 880 445 920 435 920Z"/>
            <path fill="#c4c4c4" d="M220 40 280 30 275 90 230 85Z"/>
            <path fill="#c8facc" d="M475 575 515 565 515 612 480 610ZM610 490 650 475 660 520 620 530ZM285 795 345 785 340 820 290 820ZM845 355 875 340 870 370 850 375ZM0 685 50 680 50 710 0 715Z"/>
            <path fill="#a8dccb" d="M525 510 580 500 575 525 530 530Z"/>
            <path fill="#b2b28c" d="M1095 425 1160 398 1240 420 1230 535 1140 500ZM815 835 860 822 905 835 880 850 830 852Z"/>
            <path fill="#eef0d5" d="M1400 560 1430 535 1470 640 1460 740 1400 780 1410 650Z"/>
            <path fill="#c8d7ab" d="M1380 815 1430 800 1400 830ZM1340 850 1380 835 1370 870Z"/>
            <path fill="none" stroke="#f2efe9" stroke-width="5" d="M910 870 1000 820 1140 800 1105 780"/>
            <path stroke="#4ea5ee" stroke-width="5" d="M1345 0H1375M1388 13H1418M1435 21H1457M1366 31H1375M1384 44H1414M1402 58H1422"/>
          </g>

          <!-- built-up area of the city -->
          <use href="#town" fill="url(#res)"/>
          <g fill="#add19e" stroke="#add19e" stroke-width="2" stroke-linejoin="round">
            <path d="M797 394 874 390V350L848 288 870 292 905 287 950 290 962 305 972 330 966 370 955 395 928 392 924 440 924 470 903 485 900 505 883 513 876 495 880 480 864 484 855 520 838 530 827 520 840 500 838 482 805 488 797 475 808 460 803 430Z"/>
            <path d="M992 425 1020 430 1040 440 1035 455 1000 435ZM1030 480 1070 485 1083 500 1039 499 1015 508 1025 485ZM958 470 985 475 980 497 960 490Z"/>
            <path d="M902 700 945 697 965 712 968 740 965 765 925 785 915 765 900 755Z"/>
            <path d="M723 793 730 775 757 770 780 783 772 790 818 786 800 796 755 812 735 817ZM787 737 803 733 830 747 840 762 835 787 810 785 797 763ZM850 703 873 700 877 740 850 737ZM837 627 860 620 863 657 837 663ZM875 755 905 745V785L885 780ZM845 805 865 795 885 825 860 850ZM624 850 643 846V870L630 880Z"/>
          </g>
          <g fill="#c9e1bf"><path d="M880 800 940 797 975 840 950 835 920 845 900 830 870 850 900 920 925 942 900 930 838 842ZM970 390 1000 395 1005 415 985 430 975 450 965 420ZM1005 440 1035 455 1040 450 1050 470 1025 480ZM903 540 930 538 945 548 905 560ZM970 875 1003 868 992 890 965 885ZM619 467 633 446 658 460 645 477ZM970 910 990 912 990 927 972 930Z"/></g>
          <g fill="#f2efe9" opacity=".75"><path d="M965 290 977 272 1012 310 990 325 970 305ZM926 395 955 400 945 425 928 428ZM850 278 880 283 878 296 862 292ZM917 332 932 332 932 357 915 355ZM695 425 700 448 718 467 690 470 683 450ZM765 385 785 380 780 395ZM1036 445 1060 445 1060 465 1080 470 1080 482 1045 475ZM775 830 800 800 830 810 820 838 780 842ZM925 840 950 832 970 855 950 870 920 880ZM930 925 970 915 970 932 930 943ZM1048 660 1078 660 1074 695 1035 690ZM868 600 900 610 900 640 862 655ZM495 837 520 828 525 850 492 868ZM700 815 715 812 718 845 697 860ZM800 730 818 715 830 735 815 745Z"/></g>
          <g fill="#c8facc"><path d="M643 785 658 768 702 747 710 770 698 793 670 802 650 798ZM742 510 760 498 770 503 787 503 788 515 797 532 778 540 770 530 765 515 745 515ZM858 495 868 487V500L860 527 853 522ZM755 722 762 722 765 735 758 732ZM608 820 630 825 625 840 610 830Z"/></g>
          <path fill="#aad3df" d="M860 460 870 435 876 437 868 465 858 490 846 510 838 541 830 537 843 500ZM962 433 970 429 973 447 957 447ZM900 553 925 548 955 552 966 560 950 572 925 575 900 566ZM720 508 728 525 733 545 725 530ZM774 755 782 755 784 768Z"/>
          <path fill="none" stroke="#aad3df" stroke-width="6" stroke-linejoin="round" d="M870 387 867 410 872 437 866 460M863 563Q885 572 905 562M860 563 837 580 833 600Q810 608 797 620L787 660 757 687 723 700"/>
          <path fill="none" stroke="#aad3df" stroke-width="4" stroke-linejoin="round" d="M963 562 978 560Q986 562 988 573L994 600 1008 628V655M982 662Q995 655 1010 658L1060 655Q1080 655 1085 650L1097 639Q1115 640 1123 645L1145 665Q1152 668 1158 665L1167 662Q1173 672 1177 687L1193 703 1215 705M985 662 980 700 963 725 965 745 979 775 981 795M598 778 575 807 560 814Q548 812 545 803L538 777 521 760 495 745Q470 740 448 743L431 760 408 783 391 810Q375 828 358 832L328 838 305 827 288 828"/>

          <!-- roads -->
          <use href="#grey" fill="none" stroke="#c2bdbb" stroke-width="1.800"/>
          <g fill="none" stroke-linejoin="round" stroke-linecap="round">
            <use href="#white" stroke="#b9b7b5" stroke-width="4"/><use href="#white" stroke="#fff" stroke-width="2.700"/>
            <use href="#sec" stroke="#c4cd86" stroke-width="6.500"/><use href="#sec" stroke="#f7fabf" stroke-width="4.500"/>
            <use href="#prim" stroke="#c99a55" stroke-width="7"/><use href="#prim" stroke="#fcd6a4" stroke-width="5"/>
            <use href="#trunk" stroke="#d5826b" stroke-width="7"/><use href="#trunk" stroke="#f9b29c" stroke-width="5"/>
            <path d="M672 950 679 966 686 950M668 948 678 962M673 942H684M687 948 679 962M1213 730V715M1206 1035Q1210 1020 1215 1024M1208 1032 1215 1042" stroke="#e99b86" stroke-width="2.500"/>
            <use href="#motorway" stroke="#cf6480" stroke-width="7.500"/><use href="#motorway" stroke="#e892a2" stroke-width="5.500"/>
          </g>
          <g fill="none">
            <path d="M288 997C310 1003 325 1006 348 1008Q380 1015 411 1013L598 983 683 967H843L910 978 1033 1020 1083 1035Q1110 1044 1136 1046 1165 1047 1189 1042L1215 1033" stroke="#fbf6f2" stroke-width="4.500"/>
            <path d="M288 997C310 1003 325 1006 348 1008Q380 1015 411 1013L598 983 683 967H843L910 978 1033 1020 1083 1035Q1110 1044 1136 1046 1165 1047 1189 1042L1215 1033" stroke="#f5a896" stroke-width="4.500" stroke-dasharray="3.500 4"/>
            <path d="M868 577 863 603 837 650 807 720Q800 732 787 737L740 760Q724 772 723 787 720 800 723 813L740 867 767 953 782 1020 808 1137 838 1260 855 1330" stroke="#6b6b6b" stroke-width="3"/>
            <path d="M868 577 863 603 837 650 807 720Q800 732 787 737L740 760Q724 772 723 787 720 800 723 813L740 867 767 953 782 1020 808 1137 838 1260 855 1330" stroke="#d0d0d0" stroke-width="1.200" stroke-dasharray="8 8"/>
            <path d="M648 1020 652 1007 680 997 687 987 770 977 840 973 842 950 853 945 860 963 900 980 915 970 932 990 922 1014 945 1021 973 1053 933 1063 930 1112 968 1125 989 1116 1024 1119 1069 1168 1097 1302M1215 1128 1199 1165 1166 1189V1253L1154 1295 1140 1314M648 1020 660 1032 581 1130 505 1138 365 1155 356 1240 348 1257 288 1273" stroke="#a98fa5" stroke-width="2.500" stroke-dasharray="12 3 3 3"/>
          </g>
          <path fill="#7377b4" d="M865 580H871V586H865ZM759 745H765V751H759ZM799 1127H805V1133H799ZM836 1257H842V1263H836Z" />
          <path fill="#d08f55" d="M697 1012 703 1022H691ZM930 1066 936 1076H924ZM665 1217 671 1227H659Z"/>
          <path stroke="#fff" stroke-opacity=".3" d="M607.500 114V1314M991.500 114V1314"/>

          <!-- shields and place names -->
          <g stroke-width="1.500" font-family="Noto Sans, sans-serif" font-size="16" text-anchor="middle">
            <rect x="934" y="166.500" width="58" height="24" rx="2" fill="#f0ccd4" stroke="#dc9aaa"/><rect x="521.500" y="714" width="87" height="24.500" rx="2" fill="#f6d5cd" stroke="#e0a596"/><rect x="659.500" y="885" width="58" height="24.500" rx="2" fill="#f8e5ce" stroke="#dcb893"/>
            <g stroke-width=".3"><text x="963" y="184" fill="#6c2743" stroke="#6c2743" textLength="40">А-113</text><text x="565" y="732" fill="#713427" stroke="#713427" textLength="66">46К-7200</text><text x="688.500" y="902" fill="#6b4a20" stroke="#6b4a20" textLength="40">А-107</text></g>
          </g>
          <g font-family="Noto Sans, sans-serif" font-size="16.500" font-weight="500" fill="#484848" stroke="#fff" stroke-opacity=".6" stroke-width="3" stroke-linejoin="round" paint-order="stroke">
            <text x="561" y="152.500" textLength="56">Ямкино</text>
            <text x="480" y="440" textLength="66">Молзино</text>
            <text x="727" y="239" textLength="65">Починки</text>
            <text x="698" y="481" textLength="98">им. Октября</text>
            <text x="847" y="551" textLength="63">Глухово</text>
            <text x="962" y="471.500" textLength="67">Бабенки</text>
            <text x="681" y="599" textLength="135">Старое Торбеево</text>
            <text x="707" y="658.500" textLength="67">Заречье</text>
            <text x="709" y="721" textLength="84" font-size="21">Ногинск</text>
            <text x="906" y="646" textLength="101">Панфиловка</text>
            <text x="930" y="704" textLength="84">Успенское</text>
            <text x="770" y="781.500" textLength="118">Благовещенье</text>
            <text x="633" y="822.500" textLength="56">МОГЭС</text>
            <text x="474" y="870" textLength="106">Доможирово</text>
            <text x="305" y="877" font-size="15.500" textLength="111">Радиоцентра-9</text>
            <text x="413" y="906.500" font-size="15.500" textLength="139">Новое Подвязново</text>
            <text x="851" y="897.500" textLength="150">Красный Электрик</text>
            <text x="467" y="1169" font-size="16" textLength="68">Пушкино</text>
            <text x="686" y="1120" textLength="82">Северный</text>
            <text x="677" y="1141.500" textLength="101">микрорайон</text>
            <text x="825" y="1130" textLength="89">Восточный</text>
            <text x="819" y="1151.500" textLength="101">микрорайон</text>
            <text x="678" y="1227" textLength="140" font-size="21">Электросталь</text>
            <text x="712" y="1261.500" textLength="112">Центральный</text>
            <text x="717" y="1282.500" textLength="101">микрорайон</text>
            <text x="288" y="789" textLength="23">льн</text>
            <g fill="#734a6b" font-style="italic" font-size="15.500">
              <text x="499" y="937" textLength="62">Ногинск-</text>
              <text x="495" y="954.500" textLength="71">Технопарк</text>
              <text x="937" y="1241.500" textLength="29">МСЗ</text>
            </g>
          </g>
          <use href="#town" fill="#3388ff" fill-opacity=".2" stroke="#3388ff" stroke-width="4.500" stroke-linejoin="round"/>
        </svg>

        <div class="absolute left-[15px] top-[15px] flex flex-col gap-[15px]">
          <div class="w-[51px] border-3 border-black/20 rounded-md bg-clip-padding bg-white divide-y divide-[#ccc] overflow-hidden">
            <svg class="block w-[45px] h-[45px]" viewBox="0 0 45 45"><path d="M14.500 23H33M23.500 14V32" stroke="#1976d2" stroke-width="2.500"/></svg>
            <svg class="block w-[45px] h-[45px]" viewBox="0 0 45 45"><path d="M14.500 24H33" stroke="#1976d2" stroke-width="2"/></svg>
          </div>
          <div class="w-[51px] border-3 border-black/20 rounded-md bg-clip-padding bg-white divide-y divide-[#ccc] overflow-hidden">
            <svg class="block w-[45px] h-[45px]" viewBox="54 398 135 135"><path fill="#5b5b5b" fill-rule="evenodd" d="M123 430C139 430 150 442 150 457C150 477 132 490 123 502C114 490 96 477 96 457C96 442 107 430 123 430ZM123 446A12 12 0 1 0 123 470A12 12 0 1 0 123 446Z"/></svg>
            <svg class="block w-[45px] h-[45px]" viewBox="54 533 135 135" fill="none" stroke="#5b5b5b" stroke-width="6"><path d="M101 621 138 585" stroke-width="7"/><circle cx="145" cy="578" r="10"/><circle cx="94" cy="629" r="10"/></svg>
            <svg class="block w-[45px] h-[45px]" viewBox="54 668 135 135" fill="none" stroke="#5b5b5b" stroke-width="6"><path d="M103 711H139M103 763H139M95 719V755M147 719V755" stroke-width="7"/><circle cx="94" cy="709" r="10"/><circle cx="148" cy="709" r="10"/><circle cx="94" cy="764" r="10"/><circle cx="148" cy="764" r="10"/></svg>
            <svg class="block w-[45px] h-[45px]" viewBox="54 803 135 135" fill="none" stroke="#5b5b5b" stroke-width="6"><path d="M102 891 141 852M148 854V889M104 898H139" stroke-width="7"/><circle cx="149" cy="844" r="10"/><circle cx="94" cy="899" r="10"/><circle cx="149" cy="899" r="10"/></svg>
            <svg class="block w-[45px] h-[45px]" viewBox="54 938 135 135" fill="none" stroke="#5b5b5b" stroke-width="6"><path d="M130 980A32 32 0 1 0 149 996"/><circle cx="142" cy="988" r="10"/><circle cx="120" cy="1008" r="6" fill="#5b5b5b" stroke="none"/></svg>
            <svg class="block w-[45px] h-[45px]" viewBox="54 1073 135 135" fill="none" stroke="#5b5b5b" stroke-width="5.500"><circle cx="121" cy="1141" r="31.500"/><circle cx="121" cy="1141" r="6" fill="#5b5b5b" stroke="none"/></svg>
            <svg class="block w-[45px] h-[45px]" viewBox="54 1208 135 135" fill="none" stroke="#5b5b5b" stroke-width="7"><path d="M94 1264V1248H153V1264M123 1248V1308M105 1308H141" stroke-linejoin="round"/></svg>
          </div>
          <div class="w-[51px] border-3 border-black/20 rounded-md bg-clip-padding bg-white divide-y divide-[#ccc] overflow-hidden">
            <svg class="block w-[45px] h-[45px]" viewBox="54 56 135 135" fill="none" stroke="#5b5b5b" stroke-width="6"><path d="M79 121Q90 107 106 103M125 90Q138 88 147 83"/><circle cx="116" cy="96" r="10"/><path d="M118 106V153L129 143 138 161 146 157 139 139 153 138Z" fill="#5b5b5b" stroke="none"/></svg>
            <svg class="block w-[45px] h-[45px]" viewBox="54 191 135 135" fill="#5b5b5b"><path d="M121 216 137 236H124V256H144V244L164 260 144 276V263H124V282H137L121 302 105 282H118V263H99V276L79 260 99 244V256H118V236H105Z"/></svg>
            <svg class="block w-[45px] h-[45px]" viewBox="54 326 135 135" fill="none" stroke="#5b5b5b" stroke-width="6"><circle cx="93" cy="400" r="10"/><circle cx="125" cy="426" r="10"/><path d="M103 402 118 402M123 416 121 403"/><path d="M128 353 119 372 117 407 126 407ZM164 380 140 387 116 399 118 407 134 404Z" fill="#5b5b5b" stroke="none"/></svg>
            <svg class="block w-[45px] h-[45px]" viewBox="54 461 135 135"><path d="M132 492 159 520Q161 524 157 527L139 545 108 516 128 493Z" fill="#5b5b5b"/><path d="M108 518 88 541Q86 545 90 549L104 563H121L138 545M104 563H161" fill="none" stroke="#5b5b5b" stroke-width="5"/></svg>
            <svg class="block w-[45px] h-[45px]" viewBox="54 596 135 135"><path d="M99 634 105 643A28 28 0 1 0 148 650L134 661 127 631H161L156 646A38 38 0 1 1 99 634Z" fill="#5b5b5b"/></svg>
          </div>
        </div>
        <div class="absolute bottom-0 right-0 w-[352px] h-[26px] bg-white/80 pr-2 text-right text-[18px] leading-[27px] text-[#333] whitespace-nowrap"><span class="text-[#1976d2]">Leaflet</span> | © <span class="text-[#1976d2]">OpenStreetMap</span> contributors</div>
      </div>
    </main>
  </div>
  <footer class="h-[54px] bg-[#f4f4f4] pl-6 flex items-center text-2xl text-[#212121]">Page footer</footer>
</div>
<div class="w-[25px] h-full bg-[#f0f0f0] flex flex-col justify-between items-center py-2.5">
  <svg class="w-3 h-1.5" viewBox="0 0 12 6"><path d="M6 0 12 6H0Z" fill="#a3a3a3"/></svg>
  <svg class="w-3 h-1.5" viewBox="0 0 12 6"><path d="M6 6 12 0H0Z" fill="#a3a3a3"/></svg>
</div>
</body>
</html>
